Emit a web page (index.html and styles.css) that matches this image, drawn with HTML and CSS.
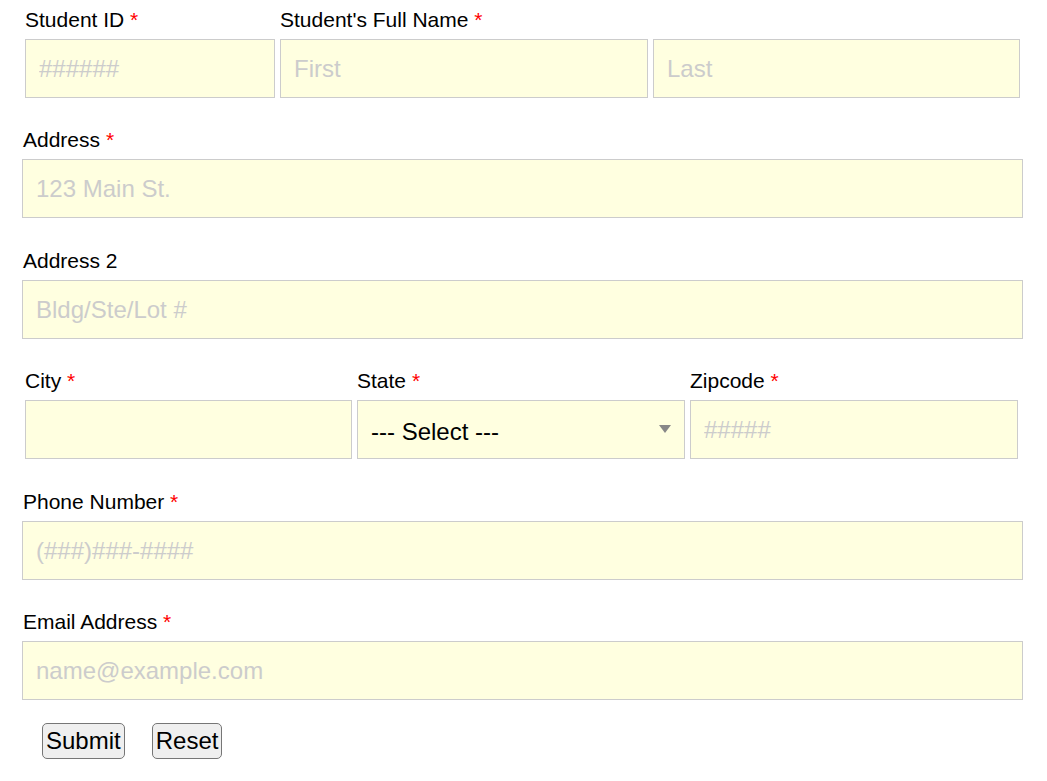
FILE: index.html
```html
<!DOCTYPE html>
<html lang="en">
<head>
<meta charset="utf-8">
<title>Student Form</title>
<link rel="stylesheet" href="styles.css">
</head>
<body>
<form class="form">
  <div class="row row-name">
    <div class="field">
      <label class="label">Student ID <span class="req">*</span></label>
      <input class="input" type="text" placeholder="######">
    </div>
    <div class="field field-span">
      <label class="label">Student's Full Name <span class="req">*</span></label>
      <div class="pair">
        <input class="input" type="text" placeholder="First">
        <input class="input" type="text" placeholder="Last">
      </div>
    </div>
  </div>

  <div class="row">
    <label class="label">Address <span class="req">*</span></label>
    <input class="input" type="text" placeholder="123 Main St.">
  </div>

  <div class="row">
    <label class="label">Address 2</label>
    <input class="input" type="text" placeholder="Bldg/Ste/Lot #">
  </div>

  <div class="row row-city">
    <div class="field">
      <label class="label">City <span class="req">*</span></label>
      <input class="input" type="text">
    </div>
    <div class="field">
      <label class="label">State <span class="req">*</span></label>
      <div class="select-wrap">
        <select class="input select">
          <option>--- Select ---</option>
        </select>
      </div>
    </div>
    <div class="field">
      <label class="label">Zipcode <span class="req">*</span></label>
      <input class="input" type="text" placeholder="#####">
    </div>
  </div>

  <div class="row">
    <label class="label">Phone Number <span class="req">*</span></label>
    <input class="input" type="text" placeholder="(###)###-####">
  </div>

  <div class="row">
    <label class="label">Email Address <span class="req">*</span></label>
    <input class="input" type="text" placeholder="name@example.com">
  </div>

  <div class="actions">
    <button class="btn" type="submit">Submit</button>
    <button class="btn" type="reset">Reset</button>
  </div>
</form>
</body>
</html>
```

FILE: styles.css
```css
html, body {
  margin: 0;
  padding: 0;
  background: #ffffff;
}

body {
  font-family: "Liberation Sans", Arial, sans-serif;
  color: #000;
}

.form {
  width: 1001px;
  padding: 8px 0 0 22px;
}

.row {
  display: flex;
  flex-direction: column;
  margin-bottom: 30.4px;
}

.label {
  display: block;
  font-size: 21px;
  line-height: 24px;
  height: 24px;
  margin: 0 0 7px 1px;
  white-space: nowrap;
}

.req {
  color: #ff0000;
}

.input {
  box-sizing: border-box;
  display: block;
  width: 100%;
  height: 59px;
  margin: 0;
  padding: 1px 13px 0 13px;
  border: 1px solid #cccccc;
  border-radius: 0;
  background: #ffffe0;
  font-family: "Liberation Sans", Arial, sans-serif;
  font-size: 24px;
  color: #000;
  outline: none;
}

.input::placeholder {
  color: #cccccc;
  opacity: 1;
}

.row-name {
  display: grid;
  grid-template-columns: 250px 1fr;
  column-gap: 5px;
  padding: 0 3px;
}

.row-name .label,
.row-city .label {
  margin-left: 0;
}

.pair {
  display: grid;
  grid-template-columns: 368px 367px;
  column-gap: 5px;
}

.row-city {
  display: grid;
  grid-template-columns: 327px 328px 328px;
  column-gap: 5px;
  padding: 0 3px;
}

.select-wrap {
  position: relative;
}

.select {
  -webkit-appearance: none;
  appearance: none;
  padding: 4px 12px 0 13px;
  cursor: pointer;
}

.select-wrap::after {
  content: "";
  position: absolute;
  right: 14px;
  top: 25px;
  width: 0;
  height: 0;
  border-left: 6px solid transparent;
  border-right: 6px solid transparent;
  border-top: 8px solid #888888;
  pointer-events: none;
}

.actions {
  display: flex;
  gap: 27px;
  padding-left: 20px;
  margin-top: -7px;
}

.btn {
  box-sizing: border-box;
  height: 36px;
  padding: 0 3px;
  border: 1px solid #767676;
  border-radius: 5px;
  background: #efefef;
  font-family: "Liberation Sans", Arial, sans-serif;
  font-size: 24px;
  color: #000;
}
```
